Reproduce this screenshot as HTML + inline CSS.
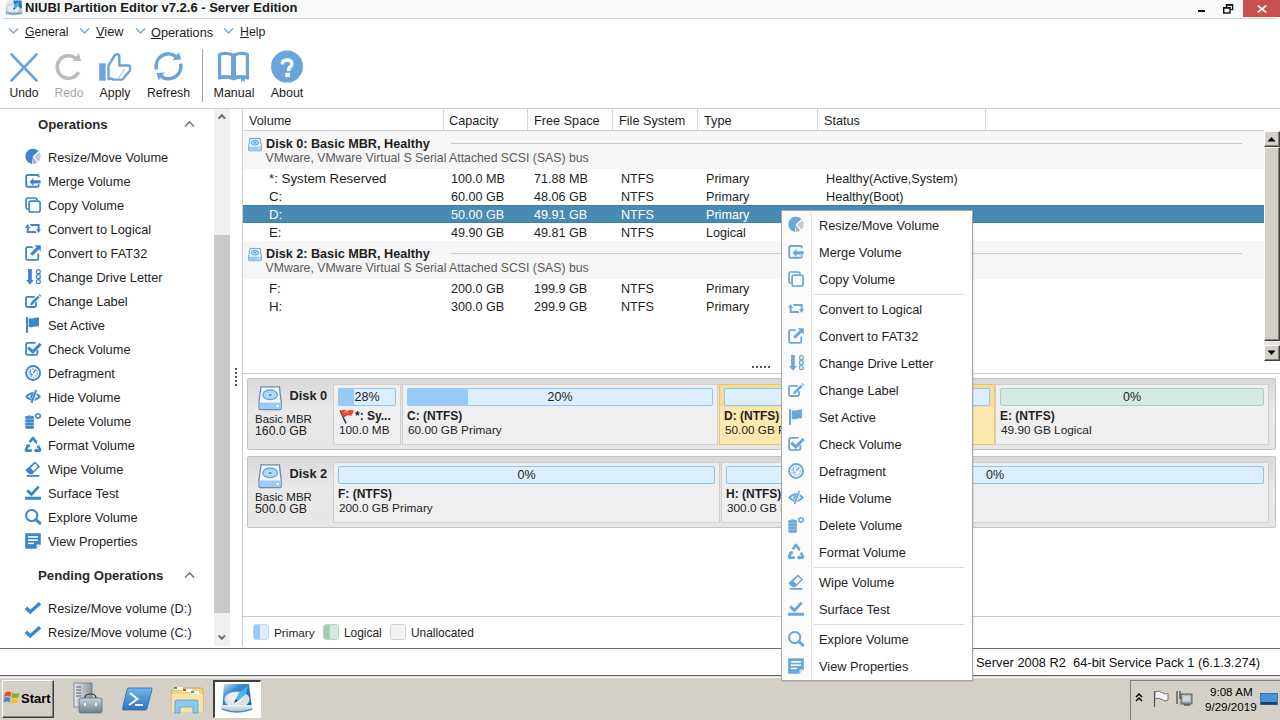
<!DOCTYPE html>
<html><head><meta charset="utf-8"><style>
html,body{margin:0;padding:0;width:1280px;height:720px;overflow:hidden;background:#fff;font-family:"Liberation Sans", sans-serif;}
.t{position:absolute;white-space:nowrap;}
.b{position:absolute;}
svg.b{overflow:visible}
u{text-decoration:underline;text-underline-offset:1px}
</style></head><body>
<div class="b" style="left:0px;top:0px;width:1280px;height:18px;background:#f8f9f9"></div>
<div class="b" style="left:3px;top:18px;width:1274px;height:1px;background:#cdd0d2"></div>
<svg class="b" style="left:5px;top:0px;" width="18" height="17" viewBox="0 0 18 17"><defs><linearGradient id="ai" x1="0" y1="0" x2="0" y2="1"><stop offset="0" stop-color="#eef2f5"/><stop offset="1" stop-color="#b9c6d0"/></linearGradient></defs>
<path d="M1.5 0 H16.5 L17.3 12 H0.7 Z" fill="url(#ai)"/>
<path d="M8 0.5 H16.5 L17 8 L11 10 Z" fill="#2e78b8"/>
<ellipse cx="8.2" cy="9" rx="6.5" ry="4.2" fill="#e9ecee" stroke="#b4bcc3" stroke-width="0.6"/>
<path d="M9.6 4.6 L14.6 1.5 L13.4 5.6 L10.4 8.8 L8.6 7.6 Z" fill="#3fb0ef"/>
<path d="M8.6 7.6 L10.4 8.8 L8.2 9.8 Z" fill="#333"/>
<path d="M0.7 12 H17.3 V14 Q9 16.5 0.7 14 Z" fill="#a9bccb"/>
<path d="M1 13 Q9 15 17 13" stroke="#4f95cf" stroke-width="0.8" fill="none"/></svg>
<div class="t" style="left:25px;top:0.10px;font-size:13px;line-height:16px;font-weight:bold;color:#1a1a1a;">NIUBI Partition Editor v7.2.6 - Server Edition</div>
<div class="b" style="left:1198px;top:10px;width:7px;height:2px;background:#111"></div>
<svg class="b" style="left:1223px;top:4px;" width="11" height="10" viewBox="0 0 11 10"><path d="M3.5 3 V0.7 H9.6 V5.6 H6.5" stroke="#111" stroke-width="1.4" fill="none"/><path d="M3 0.8 H10" stroke="#111" stroke-width="1.6"/><rect x="0.7" y="3.7" width="6.3" height="5.3" stroke="#111" stroke-width="1.4" fill="none"/><path d="M0.2 3.8 H7.4" stroke="#111" stroke-width="1.6"/></svg>
<div class="b" style="left:1243px;top:0px;width:37px;height:17px;background:#c75050"></div>
<svg class="b" style="left:1257px;top:5px;" width="10" height="8" viewBox="0 0 10 8"><path d="M0.8 0.6 L9.2 7.4 M9.2 0.6 L0.8 7.4" stroke="#fff" stroke-width="1.8"/></svg>
<svg class="b" style="left:8px;top:27px;" width="11" height="8" viewBox="0 0 11 8"><path d="M1 1.5 L5.5 6 L10 1.5" stroke="#7aa6cf" stroke-width="1.5" fill="none"/></svg>
<div class="t" style="left:25px;top:25.17px;font-size:12.2px;line-height:15px;font-weight:normal;color:#1e1e1e;"><u>G</u>eneral</div>
<svg class="b" style="left:79px;top:27px;" width="11" height="8" viewBox="0 0 11 8"><path d="M1 1.5 L5.5 6 L10 1.5" stroke="#7aa6cf" stroke-width="1.5" fill="none"/></svg>
<div class="t" style="left:96px;top:24.46px;font-size:12.8px;line-height:16px;font-weight:normal;color:#1e1e1e;"><u>V</u>iew</div>
<svg class="b" style="left:135px;top:27px;" width="11" height="8" viewBox="0 0 11 8"><path d="M1 1.5 L5.5 6 L10 1.5" stroke="#7aa6cf" stroke-width="1.5" fill="none"/></svg>
<div class="t" style="left:151px;top:24.50px;font-size:12.7px;line-height:16px;font-weight:normal;color:#1e1e1e;"><u>O</u>perations</div>
<svg class="b" style="left:223px;top:27px;" width="11" height="8" viewBox="0 0 11 8"><path d="M1 1.5 L5.5 6 L10 1.5" stroke="#7aa6cf" stroke-width="1.5" fill="none"/></svg>
<div class="t" style="left:240px;top:25.14px;font-size:12.3px;line-height:15px;font-weight:normal;color:#1e1e1e;"><u>H</u>elp</div>
<svg class="b" style="left:10px;top:53px;" width="28" height="29" viewBox="0 0 28 29"><path d="M1.5 1.5 L26.5 27.5 M26.5 1.5 L1.5 27.5" stroke="#6aa4d9" stroke-width="2.6" stroke-linecap="round"/></svg>
<svg class="b" style="left:54px;top:52px;" width="30" height="30" viewBox="0 0 30 30"><path d="M24.57 20.13 A11.3 11.3 0 1 1 21.76 6.34" stroke="#bdbdbd" stroke-width="3.6" fill="none"/><path d="M24.8 1 L27.2 8.9 L18.8 8.9 Z" fill="#bdbdbd"/></svg>
<svg class="b" style="left:98px;top:52px;" width="35" height="30" viewBox="0 0 35 30"><rect x="1.2" y="11.3" width="6.4" height="17.4" fill="#6aa4d9"/>
<path d="M10.5 27.3 V13.5 L16 4.5 Q17 2.2 19 2.2 Q21.3 2.2 21.3 4.5 V13.5 H31 Q32 13.5 32 15 V18.5 L24.5 27.6 H15 Q14 26.5 12 26.5 Z" stroke="#6aa4d9" stroke-width="2.4" fill="none" stroke-linejoin="round"/>
<path d="M20.5 26 L26.5 17" stroke="#c8ccd0" stroke-width="1.3"/></svg>
<svg class="b" style="left:152px;top:50px;" width="34" height="34" viewBox="0 0 34 34"><path d="M4.52 19.5 A12.4 12.4 0 0 1 24.47 6.8" stroke="#6aa4d9" stroke-width="3.6" fill="none"/>
<path d="M26.8 2.3 L29.3 9.5 L20.6 10.2 Z" fill="#6aa4d9"/>
<path d="M28.63 13.72 A12.4 12.4 0 0 1 8.53 25.8" stroke="#6aa4d9" stroke-width="3.6" fill="none"/>
<path d="M6.7 30.3 L4.3 23 L12.9 22.4 Z" fill="#6aa4d9"/></svg>
<div class="b" style="left:202px;top:49px;width:1px;height:53px;background:#a8a8a8"></div>
<svg class="b" style="left:216px;top:51px;" width="36" height="33" viewBox="0 0 36 33"><path d="M3.6 3.4 Q10 1.2 16.6 4 V26.6 Q10 24.8 3.6 26.6 Z M18.4 4 Q25 1.2 31.4 3.4 V26.6 Q25 24.8 18.4 26.6 Z" stroke="#6aa4d9" stroke-width="3.2" fill="none" stroke-linejoin="round"/>
<path d="M2 27.3 Q10 25.3 17.5 28 Q25 25.3 33 27.3" stroke="#6aa4d9" stroke-width="2.8" fill="none"/>
<path d="M25.2 26.5 V31.2 L27 29.6 L28.8 31.2 V26.5 Z" fill="#6aa4d9"/></svg>
<svg class="b" style="left:270px;top:50px;" width="34" height="34" viewBox="0 0 34 34"><circle cx="17" cy="16.6" r="16" fill="#6aa4d9"/>
<path d="M12.2 14.5 Q12.2 10 17 10 Q21.8 10 21.8 13.8 Q21.8 16.2 19.6 17.4 Q18.7 18 18.7 19.6 V21" stroke="#fff" stroke-width="3.4" fill="none"/>
<rect x="15.3" y="22.8" width="4.6" height="4.2" fill="#fff"/></svg>
<div class="t" style="left:-16px;top:85.71px;font-size:12.1px;line-height:15px;font-weight:normal;color:#222;width:80px;text-align:center;">Undo</div>
<div class="t" style="left:29px;top:85.71px;font-size:12.1px;line-height:15px;font-weight:normal;color:#a8a8a8;width:80px;text-align:center;">Redo</div>
<div class="t" style="left:75px;top:85.64px;font-size:12.3px;line-height:15px;font-weight:normal;color:#222;width:80px;text-align:center;">Apply</div>
<div class="t" style="left:128.5px;top:85.64px;font-size:12.3px;line-height:15px;font-weight:normal;color:#222;width:80px;text-align:center;">Refresh</div>
<div class="t" style="left:194px;top:85.07px;font-size:12.5px;line-height:16px;font-weight:normal;color:#222;width:80px;text-align:center;">Manual</div>
<div class="t" style="left:247px;top:85.07px;font-size:12.5px;line-height:16px;font-weight:normal;color:#222;width:80px;text-align:center;">About</div>
<div class="b" style="left:0px;top:108px;width:1280px;height:1px;background:#c9ced3"></div>
<div class="b" style="left:214px;top:109px;width:16px;height:537px;background:#f0f0f0"></div>
<div class="b" style="left:214px;top:235px;width:16px;height:378px;background:#c9c9c9"></div>
<svg class="b" style="left:217px;top:113px;" width="10" height="7" viewBox="0 0 10 7"><path d="M1.5 5.6 L4.8 2.2 L8.1 5.6" stroke="#6a6a6a" stroke-width="2" fill="none"/></svg>
<svg class="b" style="left:217px;top:634px;" width="10" height="7" viewBox="0 0 10 7"><path d="M1.5 1.4 L4.8 4.8 L8.1 1.4" stroke="#6a6a6a" stroke-width="2" fill="none"/></svg>
<div class="t" style="left:38px;top:117.33px;font-size:13.2px;line-height:16px;font-weight:bold;color:#2a2a2a;">Operations</div>
<svg class="b" style="left:184px;top:120px;" width="11" height="8" viewBox="0 0 11 8"><path d="M1 6.5 L5.5 2 L10 6.5" stroke="#777" stroke-width="1.6" fill="none"/></svg>
<div class="t" style="left:48px;top:150.16px;font-size:12.8px;line-height:16px;font-weight:normal;color:#1e1e1e;">Resize/Move Volume</div>
<svg class="b" style="left:25px;top:149px;color:#3a86d0" width="17" height="17" viewBox="0 0 17 17"><path d="M8 7.4 L13.6 2.3 A7.6 7.6 0 1 0 6.9 14.9 Z" fill="currentColor"/>
<path d="M8 7.4 L14.1 2.9 A7.6 7.6 0 0 1 13 13.1 Z" fill="#c3cad1"/>
<path d="M8 7.4 L12.6 13.5 A7.6 7.6 0 0 1 7.5 14.95 Z" fill="#aab8c6"/>
<path d="M14.2 2.2 L8.4 7.5 L13.2 13.6" stroke="#fff" stroke-width="1.1" fill="none"/></svg>
<div class="t" style="left:48px;top:174.16px;font-size:12.8px;line-height:16px;font-weight:normal;color:#1e1e1e;">Merge Volume</div>
<svg class="b" style="left:25px;top:173px;color:#3a86d0" width="17" height="17" viewBox="0 0 17 17"><path d="M13.7 4.3 V3.2 Q13.7 2 12.5 2 H2.4 Q1.2 2 1.2 3.2 V12.5 Q1.2 13.7 2.4 13.7 H12.5 Q13.7 13.7 13.7 12.5 V11.3" stroke="currentColor" stroke-width="1.9" fill="none"/>
<path d="M4.6 8.9 L8.4 4.8 V7.3 H15.6 V10.6 H8.4 V13 Z" fill="currentColor"/></svg>
<div class="t" style="left:48px;top:198.16px;font-size:12.8px;line-height:16px;font-weight:normal;color:#1e1e1e;">Copy Volume</div>
<svg class="b" style="left:25px;top:197px;color:#3a86d0" width="17" height="17" viewBox="0 0 17 17"><path d="M3.2 12.2 Q1 12.2 1 10 V2.9 Q1 1 2.9 1 H10 Q12 1 12.2 3.2" stroke="currentColor" stroke-width="1.7" fill="none"/>
<rect x="4.1" y="4.1" width="11" height="10.9" rx="2" stroke="currentColor" stroke-width="1.7" fill="none"/></svg>
<div class="t" style="left:48px;top:222.16px;font-size:12.8px;line-height:16px;font-weight:normal;color:#1e1e1e;">Convert to Logical</div>
<svg class="b" style="left:25px;top:221px;color:#3a86d0" width="17" height="17" viewBox="0 0 17 17"><path d="M2.6 3 L5.2 6.8 H3.6 V10.1 H10.6 L11.4 11.9 H1.7 V6.8 H0 Z" fill="currentColor"/>
<path d="M5 3 H14.6 V8.3 H16 L13.5 12 L11 8.3 H12.7 V4.9 H5.8 Z" fill="currentColor"/></svg>
<div class="t" style="left:48px;top:246.16px;font-size:12.8px;line-height:16px;font-weight:normal;color:#1e1e1e;">Convert to FAT32</div>
<svg class="b" style="left:25px;top:245px;color:#3a86d0" width="17" height="17" viewBox="0 0 17 17"><path d="M7.7 2.1 H2.6 Q1.1 2.1 1.1 3.6 V13.4 Q1.1 14.8 2.6 14.8 H11.9 Q13.3 14.8 13.3 13.4 V8.4" stroke="currentColor" stroke-width="1.8" fill="none"/>
<path d="M9.6 0.2 H15.8 V6.4 L13.8 4.4 L7.3 10.7 L5.2 8.6 L11.6 2.2 Z" fill="currentColor"/></svg>
<div class="t" style="left:48px;top:270.16px;font-size:12.8px;line-height:16px;font-weight:normal;color:#1e1e1e;">Change Drive Letter</div>
<svg class="b" style="left:25px;top:269px;color:#3a86d0" width="17" height="17" viewBox="0 0 17 17"><path d="M3.1 0 H6.8 V11 H8.8 L4.95 15.8 L1 11 H3.1 Z" fill="currentColor"/>
<rect x="11.6" y="0.6" width="3.6" height="4" rx="1.4" stroke="currentColor" stroke-width="1.3" fill="none"/>
<rect x="11.6" y="5.6" width="3.6" height="4" rx="1" stroke="currentColor" stroke-width="1.3" fill="none"/>
<rect x="11.6" y="10.6" width="3.6" height="4" rx="1.4" stroke="currentColor" stroke-width="1.3" fill="none"/></svg>
<div class="t" style="left:48px;top:294.16px;font-size:12.8px;line-height:16px;font-weight:normal;color:#1e1e1e;">Change Label</div>
<svg class="b" style="left:25px;top:293px;color:#3a86d0" width="17" height="17" viewBox="0 0 17 17"><path d="M9.7 3.8 H2.4 Q1 3.8 1 5.2 V12.6 Q1 14 2.4 14 H9.6 Q11 14 11 12.6 V9.3" stroke="currentColor" stroke-width="1.8" fill="none"/>
<path d="M5.3 12.4 L5.9 9.6 L12.8 2.7 L14.6 4.5 L7.7 11.4 Z M13.6 1.9 L14.4 1.1 L16.2 2.9 L15.4 3.7 Z" fill="currentColor"/></svg>
<div class="t" style="left:48px;top:318.16px;font-size:12.8px;line-height:16px;font-weight:normal;color:#1e1e1e;">Set Active</div>
<svg class="b" style="left:25px;top:317px;color:#3a86d0" width="17" height="17" viewBox="0 0 17 17"><rect x="1" y="0.2" width="2" height="15.6" fill="currentColor"/>
<path d="M3.7 1 Q6.5 2 9 1 Q11.5 0 14 0.6 V9.4 Q11.5 8.8 9 9.8 Q6.5 10.8 3.7 9.7 Z" fill="currentColor"/></svg>
<div class="t" style="left:48px;top:342.16px;font-size:12.8px;line-height:16px;font-weight:normal;color:#1e1e1e;">Check Volume</div>
<svg class="b" style="left:25px;top:341px;color:#3a86d0" width="17" height="17" viewBox="0 0 17 17"><path d="M10.6 1.9 H2.6 Q1.1 1.9 1.1 3.4 V12.4 Q1.1 13.8 2.6 13.8 H11 Q12.4 13.8 12.4 12.4 V9" stroke="currentColor" stroke-width="1.8" fill="none"/>
<path d="M3.2 6.6 L7.8 10.8 L15.6 2.9" stroke="currentColor" stroke-width="3" fill="none" stroke-linejoin="miter"/></svg>
<div class="t" style="left:48px;top:366.16px;font-size:12.8px;line-height:16px;font-weight:normal;color:#1e1e1e;">Defragment</div>
<svg class="b" style="left:25px;top:365px;color:#3a86d0" width="17" height="17" viewBox="0 0 17 17"><circle cx="8.1" cy="8" r="7" stroke="currentColor" stroke-width="1.9" fill="none"/>
<circle cx="8.1" cy="8" r="4.2" stroke="currentColor" stroke-width="1.2" fill="none" stroke-dasharray="1.6 1" opacity="0.75"/>
<path d="M8.1 8 L11 4.6" stroke="currentColor" stroke-width="1.4"/>
<path d="M5.6 5.2 Q4.8 8 7 9.8" stroke="currentColor" stroke-width="1.3" fill="none" opacity="0.8"/>
<circle cx="6.6" cy="9.8" r="1" fill="currentColor"/></svg>
<div class="t" style="left:48px;top:390.16px;font-size:12.8px;line-height:16px;font-weight:normal;color:#1e1e1e;">Hide Volume</div>
<svg class="b" style="left:25px;top:389px;color:#3a86d0" width="17" height="17" viewBox="0 0 17 17"><path d="M0 7.6 Q8 -1.2 16 7.6 Q8 16.4 0 7.6 Z" fill="currentColor"/>
<path d="M2.8 7.6 Q8 2.4 13.2 7.6 Q8 12.8 2.8 7.6 Z" fill="#fff"/>
<circle cx="8" cy="7.6" r="2.7" fill="currentColor"/>
<path d="M11.5 1 L6.8 13.8" stroke="#fff" stroke-width="3"/>
<path d="M11.2 1 L6.5 13.8" stroke="currentColor" stroke-width="1.9"/></svg>
<div class="t" style="left:48px;top:414.16px;font-size:12.8px;line-height:16px;font-weight:normal;color:#1e1e1e;">Delete Volume</div>
<svg class="b" style="left:25px;top:413px;color:#3a86d0" width="17" height="17" viewBox="0 0 17 17"><rect x="0.4" y="3.4" width="8.4" height="12" rx="1.5" fill="#b4c4d4"/>
<rect x="0.2" y="3" width="8.8" height="2.8" rx="1.4" fill="currentColor"/>
<rect x="0.2" y="6.5" width="8.8" height="2.5" rx="1.2" fill="currentColor"/>
<rect x="0.2" y="9.7" width="8.8" height="2.5" rx="1.2" fill="currentColor"/>
<rect x="0.2" y="12.9" width="8.8" height="2.8" rx="1.4" fill="currentColor"/>
<rect x="2.8" y="1.9" width="3.4" height="1.4" fill="#b9c3cc"/>
<circle cx="13" cy="2.9" r="2.2" stroke="currentColor" stroke-width="1.6" fill="none"/></svg>
<div class="t" style="left:48px;top:438.16px;font-size:12.8px;line-height:16px;font-weight:normal;color:#1e1e1e;">Format Volume</div>
<svg class="b" style="left:25px;top:437px;color:#3a86d0" width="17" height="17" viewBox="0 0 17 17"><path d="M4.6 5.2 L8 0.9 L10.6 4.6" stroke="currentColor" stroke-width="2.6" fill="none" stroke-linejoin="round"/>
<path d="M9 4.8 L12.4 3.6 L11.8 7.3 Z" fill="currentColor"/>
<path d="M3.2 8.4 L1 12.4 Q0.6 13.6 1.8 13.6 H6.8" stroke="currentColor" stroke-width="2.6" fill="none" stroke-linejoin="round"/>
<path d="M0.6 8.6 L4.2 6.8 L5.2 10.4 Z" fill="currentColor"/>
<path d="M12.8 8.8 L15 12.4 Q15.4 13.6 14.2 13.6 H10.6" stroke="currentColor" stroke-width="2.6" fill="none" stroke-linejoin="round"/>
<path d="M11.6 11.2 V16 L8.6 13.6 Z" fill="currentColor"/></svg>
<div class="t" style="left:48px;top:462.16px;font-size:12.8px;line-height:16px;font-weight:normal;color:#1e1e1e;">Wipe Volume</div>
<svg class="b" style="left:25px;top:461px;color:#3a86d0" width="17" height="17" viewBox="0 0 17 17"><path d="M9.9 0.5 L15.1 5.6 L7.3 13.3 H4.3 L0.3 9.3 Z" fill="currentColor"/>
<path d="M10 2.6 L13 5.6 L8.6 10 L5.6 7 Z" fill="#fff"/>
<rect x="1.7" y="14" width="12.6" height="1.8" fill="currentColor"/></svg>
<div class="t" style="left:48px;top:486.16px;font-size:12.8px;line-height:16px;font-weight:normal;color:#1e1e1e;">Surface Test</div>
<svg class="b" style="left:25px;top:485px;color:#3a86d0" width="17" height="17" viewBox="0 0 17 17"><path d="M2.2 5.4 L6.5 9.4 L13.7 1.6" stroke="currentColor" stroke-width="2.8" fill="none"/>
<rect x="0" y="11.8" width="16" height="3" rx="0.5" fill="currentColor"/></svg>
<div class="t" style="left:48px;top:510.16px;font-size:12.8px;line-height:16px;font-weight:normal;color:#1e1e1e;">Explore Volume</div>
<svg class="b" style="left:25px;top:509px;color:#3a86d0" width="17" height="17" viewBox="0 0 17 17"><circle cx="6.7" cy="6.5" r="5.6" stroke="currentColor" stroke-width="2" fill="none"/>
<path d="M10.8 10.6 L14.8 14.2" stroke="currentColor" stroke-width="3" stroke-linecap="round"/></svg>
<div class="t" style="left:48px;top:534.16px;font-size:12.8px;line-height:16px;font-weight:normal;color:#1e1e1e;">View Properties</div>
<svg class="b" style="left:25px;top:533px;color:#3a86d0" width="17" height="17" viewBox="0 0 17 17"><path d="M0.2 0.2 H15.8 V11.4 L11.4 15.8 H0.2 Z" fill="currentColor"/>
<rect x="3" y="3.1" width="10" height="1.6" fill="#fff"/>
<rect x="3" y="6.4" width="10" height="1.6" fill="#fff"/>
<rect x="3" y="9.7" width="6" height="1.4" fill="#fff"/>
<path d="M11.6 15.6 V12.2 Q11.6 11.6 12.2 11.6 H15.6 Z" fill="#dfe6ec"/></svg>
<div class="t" style="left:38px;top:568.33px;font-size:13.2px;line-height:16px;font-weight:bold;color:#2a2a2a;">Pending Operations</div>
<svg class="b" style="left:184px;top:571px;" width="11" height="8" viewBox="0 0 11 8"><path d="M1 6.5 L5.5 2 L10 6.5" stroke="#777" stroke-width="1.6" fill="none"/></svg>
<svg class="b" style="left:24px;top:601px;" width="18" height="14" viewBox="0 0 18 14"><path d="M2 6.8 L6.2 11 L16 2.2" stroke="#3a86d0" stroke-width="3.4" fill="none"/></svg>
<div class="t" style="left:48px;top:600.86px;font-size:12.8px;line-height:16px;font-weight:normal;color:#1e1e1e;">Resize/Move volume (D:)</div>
<svg class="b" style="left:24px;top:625px;" width="18" height="14" viewBox="0 0 18 14"><path d="M2 6.8 L6.2 11 L16 2.2" stroke="#3a86d0" stroke-width="3.4" fill="none"/></svg>
<div class="t" style="left:48px;top:624.86px;font-size:12.8px;line-height:16px;font-weight:normal;color:#1e1e1e;">Resize/Move volume (C:)</div>
<div class="b" style="left:235px;top:368px;width:2px;height:2px;background:#555"></div>
<div class="b" style="left:235px;top:372px;width:2px;height:2px;background:#555"></div>
<div class="b" style="left:235px;top:376px;width:2px;height:2px;background:#555"></div>
<div class="b" style="left:235px;top:380px;width:2px;height:2px;background:#555"></div>
<div class="b" style="left:235px;top:384px;width:2px;height:2px;background:#555"></div>
<div class="b" style="left:242px;top:109px;width:1px;height:537px;background:#c9ced3"></div>
<div class="b" style="left:243px;top:130px;width:1021px;height:1px;background:#c9ced3"></div>
<div class="b" style="left:443px;top:109px;width:1px;height:21px;background:#d5d9dd"></div>
<div class="b" style="left:527px;top:109px;width:1px;height:21px;background:#d5d9dd"></div>
<div class="b" style="left:612px;top:109px;width:1px;height:21px;background:#d5d9dd"></div>
<div class="b" style="left:697px;top:109px;width:1px;height:21px;background:#d5d9dd"></div>
<div class="b" style="left:817px;top:109px;width:1px;height:21px;background:#d5d9dd"></div>
<div class="b" style="left:985px;top:109px;width:1px;height:21px;background:#d5d9dd"></div>
<div class="t" style="left:249px;top:113.20px;font-size:12.7px;line-height:16px;font-weight:normal;color:#1e1e1e;">Volume</div>
<div class="t" style="left:449px;top:113.20px;font-size:12.7px;line-height:16px;font-weight:normal;color:#1e1e1e;">Capacity</div>
<div class="t" style="left:534px;top:113.20px;font-size:12.7px;line-height:16px;font-weight:normal;color:#1e1e1e;">Free Space</div>
<div class="t" style="left:619px;top:113.20px;font-size:12.7px;line-height:16px;font-weight:normal;color:#1e1e1e;">File System</div>
<div class="t" style="left:704px;top:113.20px;font-size:12.7px;line-height:16px;font-weight:normal;color:#1e1e1e;">Type</div>
<div class="t" style="left:824px;top:113.20px;font-size:12.7px;line-height:16px;font-weight:normal;color:#1e1e1e;">Status</div>
<div class="b" style="left:243px;top:131px;width:1021px;height:38px;background:#f6f6f6"></div>
<div class="b" style="left:451px;top:143px;width:791px;height:1px;background:#cbcbcb"></div>
<svg class="b" style="left:248px;top:138px;" width="14" height="14" viewBox="0 0 14 14"><g transform="scale(0.88)"><path d="M2.2 0.5 H13.8 L15.3 10 V13.5 Q15.3 14.5 14.3 14.5 H1.7 Q0.7 14.5 0.7 13.5 V10 Z" fill="#e6f2fc" stroke="#6a98c4" stroke-width="1"/>
<rect x="1.2" y="10" width="13.6" height="4" fill="#9ccaf4"/>
<ellipse cx="8" cy="5.3" rx="4.3" ry="2.8" fill="#a9d2f6" stroke="#6aa4d9" stroke-width="1"/>
<ellipse cx="8" cy="5.3" rx="1.3" ry="0.7" fill="#4f8fcf"/>
<rect x="12" y="11.5" width="1.5" height="1.3" fill="#fff"/></g></svg>
<div class="t" style="left:266px;top:135.62px;font-size:12.65px;line-height:16px;font-weight:bold;color:#1e1e1e;">Disk 0: Basic MBR, Healthy</div>
<div class="t" style="left:265.5px;top:150.96px;font-size:12.25px;line-height:15px;font-weight:normal;color:#5a5a5a;">VMware, VMware Virtual S Serial Attached SCSI (SAS) bus</div>
<div class="b" style="left:243px;top:241px;width:1021px;height:38px;background:#f6f6f6"></div>
<div class="b" style="left:451px;top:253px;width:791px;height:1px;background:#cbcbcb"></div>
<svg class="b" style="left:248px;top:248px;" width="14" height="14" viewBox="0 0 14 14"><g transform="scale(0.88)"><path d="M2.2 0.5 H13.8 L15.3 10 V13.5 Q15.3 14.5 14.3 14.5 H1.7 Q0.7 14.5 0.7 13.5 V10 Z" fill="#e6f2fc" stroke="#6a98c4" stroke-width="1"/>
<rect x="1.2" y="10" width="13.6" height="4" fill="#9ccaf4"/>
<ellipse cx="8" cy="5.3" rx="4.3" ry="2.8" fill="#a9d2f6" stroke="#6aa4d9" stroke-width="1"/>
<ellipse cx="8" cy="5.3" rx="1.3" ry="0.7" fill="#4f8fcf"/>
<rect x="12" y="11.5" width="1.5" height="1.3" fill="#fff"/></g></svg>
<div class="t" style="left:266px;top:245.62px;font-size:12.65px;line-height:16px;font-weight:bold;color:#1e1e1e;">Disk 2: Basic MBR, Healthy</div>
<div class="t" style="left:265.5px;top:260.96px;font-size:12.25px;line-height:15px;font-weight:normal;color:#5a5a5a;">VMware, VMware Virtual S Serial Attached SCSI (SAS) bus</div>
<div class="t" style="left:269px;top:169.89px;font-size:13.3px;line-height:17px;font-weight:normal;color:#1e1e1e;">*: System Reserved</div>
<div class="t" style="left:451px;top:170.63px;font-size:12.6px;line-height:16px;font-weight:normal;color:#1e1e1e;">100.0 MB</div>
<div class="t" style="left:534px;top:170.63px;font-size:12.6px;line-height:16px;font-weight:normal;color:#1e1e1e;">71.88 MB</div>
<div class="t" style="left:621px;top:170.63px;font-size:12.6px;line-height:16px;font-weight:normal;color:#1e1e1e;">NTFS</div>
<div class="t" style="left:706px;top:170.63px;font-size:12.6px;line-height:16px;font-weight:normal;color:#1e1e1e;">Primary</div>
<div class="t" style="left:826px;top:170.60px;font-size:12.7px;line-height:16px;font-weight:normal;color:#1e1e1e;">Healthy(Active,System)</div>
<div class="t" style="left:269px;top:187.89px;font-size:13.3px;line-height:17px;font-weight:normal;color:#1e1e1e;">C:</div>
<div class="t" style="left:451px;top:188.63px;font-size:12.6px;line-height:16px;font-weight:normal;color:#1e1e1e;">60.00 GB</div>
<div class="t" style="left:534px;top:188.63px;font-size:12.6px;line-height:16px;font-weight:normal;color:#1e1e1e;">48.06 GB</div>
<div class="t" style="left:621px;top:188.63px;font-size:12.6px;line-height:16px;font-weight:normal;color:#1e1e1e;">NTFS</div>
<div class="t" style="left:706px;top:188.63px;font-size:12.6px;line-height:16px;font-weight:normal;color:#1e1e1e;">Primary</div>
<div class="t" style="left:826px;top:188.60px;font-size:12.7px;line-height:16px;font-weight:normal;color:#1e1e1e;">Healthy(Boot)</div>
<div class="b" style="left:243px;top:205px;width:1021px;height:18px;background:#478bb4;box-shadow:inset 0 1px 0 #3d7fa9, inset 0 -1px 0 #3d7fa9"></div>
<div class="t" style="left:269px;top:205.89px;font-size:13.3px;line-height:17px;font-weight:normal;color:#ffffff;">D:</div>
<div class="t" style="left:451px;top:206.63px;font-size:12.6px;line-height:16px;font-weight:normal;color:#ffffff;">50.00 GB</div>
<div class="t" style="left:534px;top:206.63px;font-size:12.6px;line-height:16px;font-weight:normal;color:#ffffff;">49.91 GB</div>
<div class="t" style="left:621px;top:206.63px;font-size:12.6px;line-height:16px;font-weight:normal;color:#ffffff;">NTFS</div>
<div class="t" style="left:706px;top:206.63px;font-size:12.6px;line-height:16px;font-weight:normal;color:#ffffff;">Primary</div>
<div class="t" style="left:826px;top:206.60px;font-size:12.7px;line-height:16px;font-weight:normal;color:#ffffff;">Healthy</div>
<div class="t" style="left:269px;top:223.89px;font-size:13.3px;line-height:17px;font-weight:normal;color:#1e1e1e;">E:</div>
<div class="t" style="left:451px;top:224.63px;font-size:12.6px;line-height:16px;font-weight:normal;color:#1e1e1e;">49.90 GB</div>
<div class="t" style="left:534px;top:224.63px;font-size:12.6px;line-height:16px;font-weight:normal;color:#1e1e1e;">49.81 GB</div>
<div class="t" style="left:621px;top:224.63px;font-size:12.6px;line-height:16px;font-weight:normal;color:#1e1e1e;">NTFS</div>
<div class="t" style="left:706px;top:224.63px;font-size:12.6px;line-height:16px;font-weight:normal;color:#1e1e1e;">Logical</div>
<div class="t" style="left:826px;top:224.60px;font-size:12.7px;line-height:16px;font-weight:normal;color:#1e1e1e;">Healthy</div>
<div class="t" style="left:269px;top:279.89px;font-size:13.3px;line-height:17px;font-weight:normal;color:#1e1e1e;">F:</div>
<div class="t" style="left:451px;top:280.63px;font-size:12.6px;line-height:16px;font-weight:normal;color:#1e1e1e;">200.0 GB</div>
<div class="t" style="left:534px;top:280.63px;font-size:12.6px;line-height:16px;font-weight:normal;color:#1e1e1e;">199.9 GB</div>
<div class="t" style="left:621px;top:280.63px;font-size:12.6px;line-height:16px;font-weight:normal;color:#1e1e1e;">NTFS</div>
<div class="t" style="left:706px;top:280.63px;font-size:12.6px;line-height:16px;font-weight:normal;color:#1e1e1e;">Primary</div>
<div class="t" style="left:826px;top:280.60px;font-size:12.7px;line-height:16px;font-weight:normal;color:#1e1e1e;">Healthy</div>
<div class="t" style="left:269px;top:297.89px;font-size:13.3px;line-height:17px;font-weight:normal;color:#1e1e1e;">H:</div>
<div class="t" style="left:451px;top:298.63px;font-size:12.6px;line-height:16px;font-weight:normal;color:#1e1e1e;">300.0 GB</div>
<div class="t" style="left:534px;top:298.63px;font-size:12.6px;line-height:16px;font-weight:normal;color:#1e1e1e;">299.9 GB</div>
<div class="t" style="left:621px;top:298.63px;font-size:12.6px;line-height:16px;font-weight:normal;color:#1e1e1e;">NTFS</div>
<div class="t" style="left:706px;top:298.63px;font-size:12.6px;line-height:16px;font-weight:normal;color:#1e1e1e;">Primary</div>
<div class="t" style="left:826px;top:298.60px;font-size:12.7px;line-height:16px;font-weight:normal;color:#1e1e1e;">Healthy</div>
<div class="b" style="left:1264px;top:131px;width:16px;height:230px;background:#e8e6e0"></div>
<div class="b" style="left:1264px;top:131px;width:16px;height:16px;background:#d4d0c8;border-style:solid;border-width:1px;border-color:#fff #404040 #404040 #fff;box-sizing:border-box;box-shadow:inset -1px -1px 0 #808080, inset 1px 1px 0 #d4d0c8"></div>
<svg class="b" style="left:1267px;top:136px;" width="10" height="6" viewBox="0 0 10 6"><path d="M0.5 5.5 L4.5 1 L8.5 5.5 Z" fill="#000"/></svg>
<div class="b" style="left:1264px;top:147px;width:16px;height:194px;background:#d4d0c8;border-style:solid;border-width:1px;border-color:#fff #404040 #404040 #fff;box-sizing:border-box;box-shadow:inset -1px -1px 0 #808080, inset 1px 1px 0 #d4d0c8"></div>
<div class="b" style="left:1264px;top:345px;width:16px;height:16px;background:#d4d0c8;border-style:solid;border-width:1px;border-color:#fff #404040 #404040 #fff;box-sizing:border-box;box-shadow:inset -1px -1px 0 #808080, inset 1px 1px 0 #d4d0c8"></div>
<svg class="b" style="left:1267px;top:350px;" width="10" height="6" viewBox="0 0 10 6"><path d="M0.5 0.5 L4.5 5 L8.5 0.5 Z" fill="#000"/></svg>
<div class="b" style="left:752px;top:366px;width:2px;height:2px;background:#555"></div>
<div class="b" style="left:756px;top:366px;width:2px;height:2px;background:#555"></div>
<div class="b" style="left:760px;top:366px;width:2px;height:2px;background:#555"></div>
<div class="b" style="left:764px;top:366px;width:2px;height:2px;background:#555"></div>
<div class="b" style="left:768px;top:366px;width:2px;height:2px;background:#555"></div>
<div class="b" style="left:243px;top:373px;width:1037px;height:1px;background:#c9ced3"></div>
<div class="b" style="left:247px;top:378px;width:1029px;height:72px;background:linear-gradient(#d9d9d9,#e9e9e9 45%,#e6e6e6);border:1px solid #c4c4c4;border-radius:2px;box-sizing:border-box"></div>
<svg class="b" style="left:258px;top:386px;" width="25" height="25" viewBox="0 0 25 25"><path d="M3 0.8 H21.4 L23.2 16 V22.3 Q23.2 23.5 22 23.5 H2.2 Q1 23.5 1 22.3 V16 Z" fill="#f2f8fe" stroke="#5e8fbf" stroke-width="1.3"/>
<rect x="1.7" y="16.5" width="20.8" height="6.4" fill="#9ccaf4"/>
<ellipse cx="12.1" cy="8.9" rx="7.2" ry="4.7" fill="#bfe0fb" stroke="#5a9ad6" stroke-width="1.2"/>
<ellipse cx="12.1" cy="8.9" rx="4.5" ry="2.8" fill="none" stroke="#8ec1ee" stroke-width="0.8"/>
<ellipse cx="12.1" cy="8.9" rx="1.7" ry="1" fill="#4c8bc8"/>
<rect x="18.6" y="19" width="2.2" height="2" fill="#fff"/></svg>
<div class="t" style="left:289.5px;top:388.16px;font-size:12.8px;line-height:16px;font-weight:bold;color:#222;">Disk 0</div>
<div class="t" style="left:255px;top:411.52px;font-size:11.5px;line-height:14px;font-weight:normal;color:#222;">Basic MBR</div>
<div class="t" style="left:255px;top:424.44px;font-size:12.3px;line-height:15px;font-weight:normal;color:#222;">160.0 GB</div>
<div class="b" style="left:333px;top:384px;width:68px;height:61px;background:#efefef;border:1px solid #cfcfcf;box-sizing:border-box"></div>
<div class="b" style="left:338px;top:388px;width:58px;height:18px;background:#ddefff;border:1px solid #8ec5f5;border-radius:2px;box-sizing:border-box"></div>
<div class="b" style="left:338px;top:388px;width:16px;height:18px;background:#99caf6;border-radius:2px 0 0 2px"></div>
<div class="t" style="left:338px;top:388px;width:58px;height:18px;line-height:18px;text-align:center;font-size:12.5px;color:#222">28%</div>
<svg class="b" style="left:339px;top:409px;" width="16" height="16" viewBox="0 0 16 16"><path d="M1.2 1.5 L7 14.5" stroke="#1c2e6e" stroke-width="1.5"/><path d="M1.5 2.2 Q4.5 -0.5 8 2 Q11.5 0 15 1.8 L12.2 7 Q9 5.5 6.5 7.5 Q4.5 9 3.5 7 Z" fill="#e2472f"/><path d="M5 3 Q7 2 9 4" stroke="#f7a08c" stroke-width="1" fill="none"/></svg>
<div class="t" style="left:355px;top:409.24px;font-size:12px;line-height:15px;font-weight:bold;color:#1e1e1e;">*: Sy...</div>
<div class="t" style="left:339px;top:422.81px;font-size:11.8px;line-height:15px;font-weight:normal;color:#1e1e1e;">100.0 MB</div>
<div class="b" style="left:402px;top:384px;width:316px;height:61px;background:#efefef;border:1px solid #cfcfcf;box-sizing:border-box"></div>
<div class="b" style="left:407px;top:388px;width:306px;height:18px;background:#ddefff;border:1px solid #8ec5f5;border-radius:2px;box-sizing:border-box"></div>
<div class="b" style="left:407px;top:388px;width:61px;height:18px;background:#99caf6;border-radius:2px 0 0 2px"></div>
<div class="t" style="left:407px;top:388px;width:306px;height:18px;line-height:18px;text-align:center;font-size:12.5px;color:#222">20%</div>
<div class="t" style="left:407px;top:409.24px;font-size:12px;line-height:15px;font-weight:bold;color:#1e1e1e;">C: (NTFS)</div>
<div class="t" style="left:408px;top:422.81px;font-size:11.8px;line-height:15px;font-weight:normal;color:#1e1e1e;">60.00 GB Primary</div>
<div class="b" style="left:719px;top:384px;width:276px;height:61px;background:#fde8b0;border:1px solid #f0c36a;box-sizing:border-box"></div>
<div class="b" style="left:720px;top:385px;width:274px;height:22px;background:#f1df97"></div>
<div class="b" style="left:724px;top:388px;width:266px;height:18px;background:#ddefff;border:1px solid #8ec5f5;border-radius:2px;box-sizing:border-box"></div>
<div class="t" style="left:724px;top:388px;width:266px;height:18px;line-height:18px;text-align:center;font-size:12.5px;color:#222">0%</div>
<div class="t" style="left:724px;top:409.24px;font-size:12px;line-height:15px;font-weight:bold;color:#1e1e1e;">D: (NTFS)</div>
<div class="t" style="left:725px;top:422.81px;font-size:11.8px;line-height:15px;font-weight:normal;color:#1e1e1e;">50.00 GB Primary</div>
<div class="b" style="left:995px;top:384px;width:274px;height:61px;background:#efefef;border:1px solid #cfcfcf;box-sizing:border-box"></div>
<div class="b" style="left:1000px;top:388px;width:264px;height:18px;background:#d5e9e0;border:1px solid #a3d3bd;border-radius:2px;box-sizing:border-box"></div>
<div class="t" style="left:1000px;top:388px;width:264px;height:18px;line-height:18px;text-align:center;font-size:12.5px;color:#222">0%</div>
<div class="t" style="left:1000px;top:409.24px;font-size:12px;line-height:15px;font-weight:bold;color:#1e1e1e;">E: (NTFS)</div>
<div class="t" style="left:1001px;top:422.81px;font-size:11.8px;line-height:15px;font-weight:normal;color:#1e1e1e;">49.90 GB Logical</div>
<div class="b" style="left:247px;top:456px;width:1029px;height:72px;background:linear-gradient(#d9d9d9,#e9e9e9 45%,#e6e6e6);border:1px solid #c4c4c4;border-radius:2px;box-sizing:border-box"></div>
<svg class="b" style="left:258px;top:464px;" width="25" height="25" viewBox="0 0 25 25"><path d="M3 0.8 H21.4 L23.2 16 V22.3 Q23.2 23.5 22 23.5 H2.2 Q1 23.5 1 22.3 V16 Z" fill="#f2f8fe" stroke="#5e8fbf" stroke-width="1.3"/>
<rect x="1.7" y="16.5" width="20.8" height="6.4" fill="#9ccaf4"/>
<ellipse cx="12.1" cy="8.9" rx="7.2" ry="4.7" fill="#bfe0fb" stroke="#5a9ad6" stroke-width="1.2"/>
<ellipse cx="12.1" cy="8.9" rx="4.5" ry="2.8" fill="none" stroke="#8ec1ee" stroke-width="0.8"/>
<ellipse cx="12.1" cy="8.9" rx="1.7" ry="1" fill="#4c8bc8"/>
<rect x="18.6" y="19" width="2.2" height="2" fill="#fff"/></svg>
<div class="t" style="left:289.5px;top:466.16px;font-size:12.8px;line-height:16px;font-weight:bold;color:#222;">Disk 2</div>
<div class="t" style="left:255px;top:489.52px;font-size:11.5px;line-height:14px;font-weight:normal;color:#222;">Basic MBR</div>
<div class="t" style="left:255px;top:502.44px;font-size:12.3px;line-height:15px;font-weight:normal;color:#222;">500.0 GB</div>
<div class="b" style="left:333px;top:462px;width:387px;height:61px;background:#efefef;border:1px solid #cfcfcf;box-sizing:border-box"></div>
<div class="b" style="left:338px;top:466px;width:377px;height:18px;background:#ddefff;border:1px solid #8ec5f5;border-radius:2px;box-sizing:border-box"></div>
<div class="t" style="left:338px;top:466px;width:377px;height:18px;line-height:18px;text-align:center;font-size:12.5px;color:#222">0%</div>
<div class="t" style="left:338px;top:487.24px;font-size:12px;line-height:15px;font-weight:bold;color:#1e1e1e;">F: (NTFS)</div>
<div class="t" style="left:339px;top:500.81px;font-size:11.8px;line-height:15px;font-weight:normal;color:#1e1e1e;">200.0 GB Primary</div>
<div class="b" style="left:721px;top:462px;width:548px;height:61px;background:#efefef;border:1px solid #cfcfcf;box-sizing:border-box"></div>
<div class="b" style="left:726px;top:466px;width:538px;height:18px;background:#ddefff;border:1px solid #8ec5f5;border-radius:2px;box-sizing:border-box"></div>
<div class="t" style="left:726px;top:466px;width:538px;height:18px;line-height:18px;text-align:center;font-size:12.5px;color:#222">0%</div>
<div class="t" style="left:726px;top:487.24px;font-size:12px;line-height:15px;font-weight:bold;color:#1e1e1e;">H: (NTFS)</div>
<div class="t" style="left:727px;top:500.81px;font-size:11.8px;line-height:15px;font-weight:normal;color:#1e1e1e;">300.0 GB Primary</div>
<div class="b" style="left:243px;top:616px;width:1037px;height:1px;background:#c9ced3"></div>
<div class="b" style="left:253px;top:624px;width:16px;height:16px;background:linear-gradient(90deg,#99caf6 0 45%,#ddefff 45%);border:1px solid #b6daf8;border-radius:3px;box-sizing:border-box"></div>
<div class="t" style="left:274px;top:626.31px;font-size:11.8px;line-height:15px;font-weight:normal;color:#1e1e1e;">Primary</div>
<div class="b" style="left:323px;top:624px;width:16px;height:16px;background:linear-gradient(90deg,#a3cdb5 0 45%,#d5e9e0 45%);border:1px solid #b5d8c5;border-radius:3px;box-sizing:border-box"></div>
<div class="t" style="left:344px;top:626.28px;font-size:11.9px;line-height:15px;font-weight:normal;color:#1e1e1e;">Logical</div>
<div class="b" style="left:390px;top:624px;width:16px;height:16px;background:#f2f2f2;border:1px solid #cfcfcf;border-radius:3px;box-sizing:border-box"></div>
<div class="t" style="left:411px;top:626.28px;font-size:11.9px;line-height:15px;font-weight:normal;color:#1e1e1e;">Unallocated</div>
<div class="b" style="left:0px;top:648px;width:1280px;height:28px;background:#fff;border-top:1px solid #6e6e6e;border-bottom:1px solid #6e6e6e;box-sizing:border-box"></div>
<div class="t" style="left:976px;top:655.45px;font-size:12.85px;line-height:16px;font-weight:normal;color:#111;">Server 2008 R2&nbsp; 64-bit Service Pack 1 (6.1.3.274)</div>
<div class="b" style="left:0px;top:676px;width:1280px;height:44px;background:#d4d0c8"></div>
<div class="b" style="left:0px;top:677px;width:1280px;height:1px;background:#fff"></div>
<div class="b" style="left:2px;top:680px;width:52px;height:38px;background:#d4d0c8;border-style:solid;border-width:1px;border-color:#fff #404040 #404040 #fff;box-sizing:border-box;box-shadow:inset -1px -1px 0 #808080, inset 1px 1px 0 #d4d0c8"></div>
<svg class="b" style="left:4px;top:690px;" width="17" height="15" viewBox="0 0 17 15"><path d="M1 3 Q4 0.5 7.5 2.5 L6.5 7 Q3.5 5 0 7.5 Z" fill="#e8502a"/>
<path d="M8.3 2.8 Q11.5 5 15.5 2.5 L14.5 7 Q11 9 7.5 7.2 Z" fill="#7ab82e"/>
<path d="M0 8.3 Q3.5 6 6.4 8 L5.4 12.5 Q2.5 10.5 -0.5 12.5 Z" fill="#3a8fdc"/>
<path d="M7.3 8 Q10.5 10 14.3 7.8 L13.3 12.3 Q10 14.5 6.3 12.5 Z" fill="#f7c02a"/></svg>
<div class="t" style="left:21px;top:691.40px;font-size:13px;line-height:16px;font-weight:bold;color:#000;">Start</div>
<svg class="b" style="left:72px;top:682px;" width="32" height="33" viewBox="0 0 32 33"><defs><linearGradient id="sm" x1="0" x2="1"><stop offset="0" stop-color="#e4e8ec"/><stop offset="1" stop-color="#8d98a2"/></linearGradient><linearGradient id="tb" x1="0" y1="0" x2="0" y2="1"><stop offset="0" stop-color="#c8d2da"/><stop offset="1" stop-color="#6f7f8c"/></linearGradient></defs>
<rect x="2" y="1" width="18" height="24" fill="url(#sm)" stroke="#6c7680" stroke-width="0.8"/>
<path d="M4 5 H9 M4 8 H9 M4 11 H9 M4 14 H9" stroke="#5d6b78" stroke-width="1"/>
<rect x="7" y="16" width="23" height="15" rx="2" fill="url(#tb)" stroke="#5f6e7a" stroke-width="0.8"/>
<path d="M13 16 Q13 12 18.5 12 Q24 12 24 16" stroke="#333" stroke-width="1.2" fill="none"/>
<rect x="12" y="21" width="2" height="3" fill="#eee"/><rect x="23" y="21" width="2" height="3" fill="#eee"/></svg>
<svg class="b" style="left:122px;top:687px;" width="31" height="24" viewBox="0 0 31 24"><defs><linearGradient id="ps" x1="0" y1="0" x2="0" y2="1"><stop offset="0" stop-color="#6fb6ec"/><stop offset="1" stop-color="#2f72b8"/></linearGradient></defs>
<path d="M6 1 H29 Q30.5 1 30 2.5 L25 21.5 Q24.6 23 23 23 H1.5 Q0 23 0.5 21.5 L5 2.5 Q5.4 1 6 1 Z" fill="url(#ps)" stroke="#2d6aa8" stroke-width="0.8"/>
<path d="M8 6 L15.5 12 L7 18" stroke="#fff" stroke-width="2" fill="none"/>
<rect x="13" y="17" width="8" height="2" fill="#e8f2fb"/></svg>
<svg class="b" style="left:170px;top:685px;" width="35" height="31" viewBox="0 0 35 31"><path d="M1.5 5 H11 L13 3 H31 Q33 3 33 5 V26 H1.5 Z" fill="#f3d47c" stroke="#c9a24a" stroke-width="0.8"/>
<rect x="4" y="2" width="9" height="3" fill="#fff"/><rect x="4" y="2" width="3" height="2" fill="#2fb13a"/>
<rect x="12" y="4" width="10" height="3" fill="#fff"/><rect x="13" y="4" width="3" height="2" fill="#e03a2a"/>
<rect x="20" y="6" width="9" height="3" fill="#fff"/><rect x="21" y="6" width="3" height="2" fill="#3a8ee0"/>
<path d="M1.5 9 H33 V27 H1.5 Z" fill="#fbe6a6" opacity="0.9"/>
<path d="M5 28 V17 Q5 15 7 15 H26 Q28 15 28 17 V28 H23 V22 H10 V28 Z" fill="#8cc8f2" stroke="#4e9ad6" stroke-width="0.8"/></svg>
<div class="b" style="left:213px;top:680px;width:48px;height:38px;background:#fff;border-style:solid;border-width:2px 1px 1px 2px;border-color:#404040 #fff #fff #404040;box-sizing:border-box"></div>
<svg class="b" style="left:220px;top:683px;" width="34" height="33" viewBox="0 0 34 33"><defs><linearGradient id="nb" x1="0" y1="0" x2="1" y2="1"><stop offset="0" stop-color="#cfe0ee"/><stop offset="0.35" stop-color="#3d8ad0"/><stop offset="1" stop-color="#1d5f9f"/></linearGradient><linearGradient id="nbs" x1="0" y1="0" x2="0" y2="1"><stop offset="0" stop-color="#eef2f5"/><stop offset="1" stop-color="#9fb0bf"/></linearGradient></defs>
<path d="M4 1 H29 L31.5 22 H2.5 Z" fill="url(#nb)"/>
<ellipse cx="17" cy="16.5" rx="12.5" ry="8" fill="#dcdfe2"/>
<ellipse cx="15" cy="15" rx="8" ry="5" fill="#eef0f2"/>
<path d="M19.5 9 L28 3 L25.5 11.5 L18 18 L15.8 16 Z" fill="#45b5ee"/>
<path d="M15.8 16 L18 18 L13.8 19.8 Z" fill="#333"/>
<path d="M1.5 22 H32.5 V27 Q17 33 1.5 27 Z" fill="url(#nbs)"/>
<path d="M2 26 Q17 31.5 32 26" stroke="#3a86c8" stroke-width="1.2" fill="none"/></svg>
<div class="b" style="left:1130px;top:680px;width:150px;height:40px;border-style:solid;border-width:1px 0 0 1px;border-color:#808080;box-sizing:border-box;box-shadow:inset 1px 1px 0 #d4d0c8"></div>
<svg class="b" style="left:1135px;top:693px;" width="8" height="9" viewBox="0 0 8 9"><path d="M1 4 L4 1 L7 4 M1 8 L4 5 L7 8" stroke="#000" stroke-width="1.5" fill="none"/></svg>
<svg class="b" style="left:1152px;top:690px;" width="17" height="18" viewBox="0 0 17 18"><path d="M2.5 1 V17" stroke="#555" stroke-width="1.2"/><path d="M3 2 Q7 0 10 2.5 Q13 5 16 3.5 V10 Q13 12 10 9.5 Q7 7 3 9 Z" fill="#f4f4f4" stroke="#666" stroke-width="0.9"/></svg>
<svg class="b" style="left:1175px;top:690px;" width="18" height="18" viewBox="0 0 18 18"><rect x="6" y="4" width="11" height="10" fill="#9aa3aa" stroke="#555" stroke-width="0.9"/><rect x="7.5" y="5.5" width="8" height="6" fill="#cfd6dc"/><path d="M2 1 V14 M5 1 V9" stroke="#444" stroke-width="1.2"/><path d="M9 15 H15" stroke="#444" stroke-width="1.2"/></svg>
<div class="t" style="left:1210px;top:684.88px;font-size:11.6px;line-height:14px;font-weight:normal;color:#000;">9:08 AM</div>
<div class="t" style="left:1205px;top:700.38px;font-size:11.6px;line-height:14px;font-weight:normal;color:#000;">9/29/2019</div>
<svg class="b" style="left:1260px;top:693px;" width="18" height="13" viewBox="0 0 18 13"><rect x="0.5" y="0.5" width="17" height="11" fill="#4a90d9" stroke="#2a5f9e" stroke-width="0.8"/><rect x="1" y="9" width="16" height="2.5" fill="#1f3f66"/></svg>
<div class="b" style="left:781px;top:210px;width:192px;height:471px;background:#fff;border:1px solid #a7a7a7;box-sizing:border-box;box-shadow:1px 1px 1px rgba(0,0,0,0.08)"></div>
<div class="b" style="left:782px;top:211px;width:29px;height:469px;background:#fbfbfb"></div>
<div class="b" style="left:811px;top:212px;width:1px;height:467px;background:#e2e3e4"></div>
<svg class="b" style="left:788px;top:217px;color:#6ba6dc" width="17" height="17" viewBox="0 0 17 17"><path d="M8 7.4 L13.6 2.3 A7.6 7.6 0 1 0 6.9 14.9 Z" fill="currentColor"/>
<path d="M8 7.4 L14.1 2.9 A7.6 7.6 0 0 1 13 13.1 Z" fill="#c3cad1"/>
<path d="M8 7.4 L12.6 13.5 A7.6 7.6 0 0 1 7.5 14.95 Z" fill="#aab8c6"/>
<path d="M14.2 2.2 L8.4 7.5 L13.2 13.6" stroke="#fff" stroke-width="1.1" fill="none"/></svg>
<div class="t" style="left:819px;top:218.46px;font-size:12.8px;line-height:16px;font-weight:normal;color:#1e1e1e;">Resize/Move Volume</div>
<svg class="b" style="left:788px;top:244px;color:#6ba6dc" width="17" height="17" viewBox="0 0 17 17"><path d="M13.7 4.3 V3.2 Q13.7 2 12.5 2 H2.4 Q1.2 2 1.2 3.2 V12.5 Q1.2 13.7 2.4 13.7 H12.5 Q13.7 13.7 13.7 12.5 V11.3" stroke="currentColor" stroke-width="1.9" fill="none"/>
<path d="M4.6 8.9 L8.4 4.8 V7.3 H15.6 V10.6 H8.4 V13 Z" fill="currentColor"/></svg>
<div class="t" style="left:819px;top:245.46px;font-size:12.8px;line-height:16px;font-weight:normal;color:#1e1e1e;">Merge Volume</div>
<svg class="b" style="left:788px;top:271px;color:#6ba6dc" width="17" height="17" viewBox="0 0 17 17"><path d="M3.2 12.2 Q1 12.2 1 10 V2.9 Q1 1 2.9 1 H10 Q12 1 12.2 3.2" stroke="currentColor" stroke-width="1.7" fill="none"/>
<rect x="4.1" y="4.1" width="11" height="10.9" rx="2" stroke="currentColor" stroke-width="1.7" fill="none"/></svg>
<div class="t" style="left:819px;top:272.46px;font-size:12.8px;line-height:16px;font-weight:normal;color:#1e1e1e;">Copy Volume</div>
<div class="b" style="left:814px;top:294px;width:150px;height:1px;background:#dcdcdc"></div>
<svg class="b" style="left:788px;top:301px;color:#6ba6dc" width="17" height="17" viewBox="0 0 17 17"><path d="M2.6 3 L5.2 6.8 H3.6 V10.1 H10.6 L11.4 11.9 H1.7 V6.8 H0 Z" fill="currentColor"/>
<path d="M5 3 H14.6 V8.3 H16 L13.5 12 L11 8.3 H12.7 V4.9 H5.8 Z" fill="currentColor"/></svg>
<div class="t" style="left:819px;top:302.46px;font-size:12.8px;line-height:16px;font-weight:normal;color:#1e1e1e;">Convert to Logical</div>
<svg class="b" style="left:788px;top:328px;color:#6ba6dc" width="17" height="17" viewBox="0 0 17 17"><path d="M7.7 2.1 H2.6 Q1.1 2.1 1.1 3.6 V13.4 Q1.1 14.8 2.6 14.8 H11.9 Q13.3 14.8 13.3 13.4 V8.4" stroke="currentColor" stroke-width="1.8" fill="none"/>
<path d="M9.6 0.2 H15.8 V6.4 L13.8 4.4 L7.3 10.7 L5.2 8.6 L11.6 2.2 Z" fill="currentColor"/></svg>
<div class="t" style="left:819px;top:329.46px;font-size:12.8px;line-height:16px;font-weight:normal;color:#1e1e1e;">Convert to FAT32</div>
<svg class="b" style="left:788px;top:355px;color:#6ba6dc" width="17" height="17" viewBox="0 0 17 17"><path d="M3.1 0 H6.8 V11 H8.8 L4.95 15.8 L1 11 H3.1 Z" fill="currentColor"/>
<rect x="11.6" y="0.6" width="3.6" height="4" rx="1.4" stroke="currentColor" stroke-width="1.3" fill="none"/>
<rect x="11.6" y="5.6" width="3.6" height="4" rx="1" stroke="currentColor" stroke-width="1.3" fill="none"/>
<rect x="11.6" y="10.6" width="3.6" height="4" rx="1.4" stroke="currentColor" stroke-width="1.3" fill="none"/></svg>
<div class="t" style="left:819px;top:356.46px;font-size:12.8px;line-height:16px;font-weight:normal;color:#1e1e1e;">Change Drive Letter</div>
<svg class="b" style="left:788px;top:382px;color:#6ba6dc" width="17" height="17" viewBox="0 0 17 17"><path d="M9.7 3.8 H2.4 Q1 3.8 1 5.2 V12.6 Q1 14 2.4 14 H9.6 Q11 14 11 12.6 V9.3" stroke="currentColor" stroke-width="1.8" fill="none"/>
<path d="M5.3 12.4 L5.9 9.6 L12.8 2.7 L14.6 4.5 L7.7 11.4 Z M13.6 1.9 L14.4 1.1 L16.2 2.9 L15.4 3.7 Z" fill="currentColor"/></svg>
<div class="t" style="left:819px;top:383.46px;font-size:12.8px;line-height:16px;font-weight:normal;color:#1e1e1e;">Change Label</div>
<svg class="b" style="left:788px;top:409px;color:#6ba6dc" width="17" height="17" viewBox="0 0 17 17"><rect x="1" y="0.2" width="2" height="15.6" fill="currentColor"/>
<path d="M3.7 1 Q6.5 2 9 1 Q11.5 0 14 0.6 V9.4 Q11.5 8.8 9 9.8 Q6.5 10.8 3.7 9.7 Z" fill="currentColor"/></svg>
<div class="t" style="left:819px;top:410.46px;font-size:12.8px;line-height:16px;font-weight:normal;color:#1e1e1e;">Set Active</div>
<svg class="b" style="left:788px;top:436px;color:#6ba6dc" width="17" height="17" viewBox="0 0 17 17"><path d="M10.6 1.9 H2.6 Q1.1 1.9 1.1 3.4 V12.4 Q1.1 13.8 2.6 13.8 H11 Q12.4 13.8 12.4 12.4 V9" stroke="currentColor" stroke-width="1.8" fill="none"/>
<path d="M3.2 6.6 L7.8 10.8 L15.6 2.9" stroke="currentColor" stroke-width="3" fill="none" stroke-linejoin="miter"/></svg>
<div class="t" style="left:819px;top:437.46px;font-size:12.8px;line-height:16px;font-weight:normal;color:#1e1e1e;">Check Volume</div>
<svg class="b" style="left:788px;top:463px;color:#6ba6dc" width="17" height="17" viewBox="0 0 17 17"><circle cx="8.1" cy="8" r="7" stroke="currentColor" stroke-width="1.9" fill="none"/>
<circle cx="8.1" cy="8" r="4.2" stroke="currentColor" stroke-width="1.2" fill="none" stroke-dasharray="1.6 1" opacity="0.75"/>
<path d="M8.1 8 L11 4.6" stroke="currentColor" stroke-width="1.4"/>
<path d="M5.6 5.2 Q4.8 8 7 9.8" stroke="currentColor" stroke-width="1.3" fill="none" opacity="0.8"/>
<circle cx="6.6" cy="9.8" r="1" fill="currentColor"/></svg>
<div class="t" style="left:819px;top:464.46px;font-size:12.8px;line-height:16px;font-weight:normal;color:#1e1e1e;">Defragment</div>
<svg class="b" style="left:788px;top:490px;color:#6ba6dc" width="17" height="17" viewBox="0 0 17 17"><path d="M0 7.6 Q8 -1.2 16 7.6 Q8 16.4 0 7.6 Z" fill="currentColor"/>
<path d="M2.8 7.6 Q8 2.4 13.2 7.6 Q8 12.8 2.8 7.6 Z" fill="#fff"/>
<circle cx="8" cy="7.6" r="2.7" fill="currentColor"/>
<path d="M11.5 1 L6.8 13.8" stroke="#fff" stroke-width="3"/>
<path d="M11.2 1 L6.5 13.8" stroke="currentColor" stroke-width="1.9"/></svg>
<div class="t" style="left:819px;top:491.46px;font-size:12.8px;line-height:16px;font-weight:normal;color:#1e1e1e;">Hide Volume</div>
<svg class="b" style="left:788px;top:517px;color:#6ba6dc" width="17" height="17" viewBox="0 0 17 17"><rect x="0.4" y="3.4" width="8.4" height="12" rx="1.5" fill="#b4c4d4"/>
<rect x="0.2" y="3" width="8.8" height="2.8" rx="1.4" fill="currentColor"/>
<rect x="0.2" y="6.5" width="8.8" height="2.5" rx="1.2" fill="currentColor"/>
<rect x="0.2" y="9.7" width="8.8" height="2.5" rx="1.2" fill="currentColor"/>
<rect x="0.2" y="12.9" width="8.8" height="2.8" rx="1.4" fill="currentColor"/>
<rect x="2.8" y="1.9" width="3.4" height="1.4" fill="#b9c3cc"/>
<circle cx="13" cy="2.9" r="2.2" stroke="currentColor" stroke-width="1.6" fill="none"/></svg>
<div class="t" style="left:819px;top:518.46px;font-size:12.8px;line-height:16px;font-weight:normal;color:#1e1e1e;">Delete Volume</div>
<svg class="b" style="left:788px;top:544px;color:#6ba6dc" width="17" height="17" viewBox="0 0 17 17"><path d="M4.6 5.2 L8 0.9 L10.6 4.6" stroke="currentColor" stroke-width="2.6" fill="none" stroke-linejoin="round"/>
<path d="M9 4.8 L12.4 3.6 L11.8 7.3 Z" fill="currentColor"/>
<path d="M3.2 8.4 L1 12.4 Q0.6 13.6 1.8 13.6 H6.8" stroke="currentColor" stroke-width="2.6" fill="none" stroke-linejoin="round"/>
<path d="M0.6 8.6 L4.2 6.8 L5.2 10.4 Z" fill="currentColor"/>
<path d="M12.8 8.8 L15 12.4 Q15.4 13.6 14.2 13.6 H10.6" stroke="currentColor" stroke-width="2.6" fill="none" stroke-linejoin="round"/>
<path d="M11.6 11.2 V16 L8.6 13.6 Z" fill="currentColor"/></svg>
<div class="t" style="left:819px;top:545.46px;font-size:12.8px;line-height:16px;font-weight:normal;color:#1e1e1e;">Format Volume</div>
<div class="b" style="left:814px;top:567px;width:150px;height:1px;background:#dcdcdc"></div>
<svg class="b" style="left:788px;top:574px;color:#6ba6dc" width="17" height="17" viewBox="0 0 17 17"><path d="M9.9 0.5 L15.1 5.6 L7.3 13.3 H4.3 L0.3 9.3 Z" fill="currentColor"/>
<path d="M10 2.6 L13 5.6 L8.6 10 L5.6 7 Z" fill="#fff"/>
<rect x="1.7" y="14" width="12.6" height="1.8" fill="currentColor"/></svg>
<div class="t" style="left:819px;top:575.46px;font-size:12.8px;line-height:16px;font-weight:normal;color:#1e1e1e;">Wipe Volume</div>
<svg class="b" style="left:788px;top:601px;color:#6ba6dc" width="17" height="17" viewBox="0 0 17 17"><path d="M2.2 5.4 L6.5 9.4 L13.7 1.6" stroke="currentColor" stroke-width="2.8" fill="none"/>
<rect x="0" y="11.8" width="16" height="3" rx="0.5" fill="currentColor"/></svg>
<div class="t" style="left:819px;top:602.46px;font-size:12.8px;line-height:16px;font-weight:normal;color:#1e1e1e;">Surface Test</div>
<div class="b" style="left:814px;top:624px;width:150px;height:1px;background:#dcdcdc"></div>
<svg class="b" style="left:788px;top:631px;color:#6ba6dc" width="17" height="17" viewBox="0 0 17 17"><circle cx="6.7" cy="6.5" r="5.6" stroke="currentColor" stroke-width="2" fill="none"/>
<path d="M10.8 10.6 L14.8 14.2" stroke="currentColor" stroke-width="3" stroke-linecap="round"/></svg>
<div class="t" style="left:819px;top:632.46px;font-size:12.8px;line-height:16px;font-weight:normal;color:#1e1e1e;">Explore Volume</div>
<svg class="b" style="left:788px;top:658px;color:#6ba6dc" width="17" height="17" viewBox="0 0 17 17"><path d="M0.2 0.2 H15.8 V11.4 L11.4 15.8 H0.2 Z" fill="currentColor"/>
<rect x="3" y="3.1" width="10" height="1.6" fill="#fff"/>
<rect x="3" y="6.4" width="10" height="1.6" fill="#fff"/>
<rect x="3" y="9.7" width="6" height="1.4" fill="#fff"/>
<path d="M11.6 15.6 V12.2 Q11.6 11.6 12.2 11.6 H15.6 Z" fill="#dfe6ec"/></svg>
<div class="t" style="left:819px;top:659.46px;font-size:12.8px;line-height:16px;font-weight:normal;color:#1e1e1e;">View Properties</div>
</body></html>
